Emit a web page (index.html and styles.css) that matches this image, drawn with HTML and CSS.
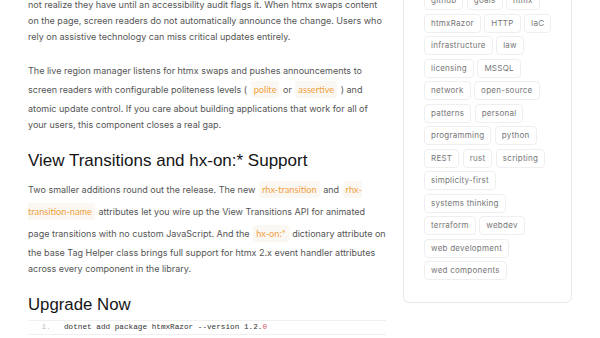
FILE: index.html
```html
<!DOCTYPE html>
<html lang="en">
<head>
    <meta charset="UTF-8">
    <meta name="viewport" content="width=device-width, initial-scale=1.0">
    <title>htmxRazor 1.2.0 Release Notes</title>
    <link rel="stylesheet" href="styles.css">
</head>
<body>
    <div class="layout">
        <main class="post">
            <p>not realize they have until an accessibility audit flags it. When htmx swaps content on the page, screen readers do not automatically announce the change. Users who rely on assistive technology can miss critical updates entirely.</p>

            <p>The live region manager listens for htmx swaps and pushes announcements to screen readers with configurable politeness levels ( <code>polite</code> or <code>assertive</code> ) and atomic update control. If you care about building applications that work for all of your users, this component closes a real gap.</p>

            <h2>View Transitions and hx-on:* Support</h2>

            <p>Two smaller additions round out the release. The new <code>rhx-transition</code> and <code>rhx-transition-name</code> attributes let you wire up the View Transitions API for animated page transitions with no custom JavaScript. And the <code>hx-on:*</code> dictionary attribute on the base Tag Helper class brings full support for htmx 2.x event handler attributes across every component in the library.</p>

            <h2 class="upgrade">Upgrade Now</h2>

            <div class="codeblock">
                <span class="ln">1.</span>
                <span class="code">dotnet add package htmxRazor --version 1.2.<span class="num">0</span></span>
            </div>
        </main>

        <aside class="sidebar">
            <div class="card">
                <div class="tags">
                    <span class="tag">github</span>
                    <span class="tag">goals</span>
                    <span class="tag">htmx</span>
                    <span class="tag">htmxRazor</span>
                    <span class="tag">HTTP</span>
                    <span class="tag">IaC</span>
                    <span class="tag">infrastructure</span>
                    <span class="tag">law</span>
                    <span class="tag">licensing</span>
                    <span class="tag">MSSQL</span>
                    <span class="tag">network</span>
                    <span class="tag">open-source</span>
                    <span class="tag">patterns</span>
                    <span class="tag">personal</span>
                    <span class="tag">programming</span>
                    <span class="tag">python</span>
                    <span class="tag">REST</span>
                    <span class="tag">rust</span>
                    <span class="tag">scripting</span>
                    <span class="tag">simplicity-first</span>
                    <span class="tag">systems thinking</span>
                    <span class="tag">terraform</span>
                    <span class="tag">webdev</span>
                    <span class="tag">web development</span>
                    <span class="tag">wed components</span>
                </div>
            </div>
        </aside>
    </div>
</body>
</html>
```

FILE: styles.css
```css
body {
    margin: 0;
    background-color: #fff;
    font-family: 'Inter', 'Liberation Sans', sans-serif;
    color: #555;
    overflow: hidden;
}

.layout {
    display: flex;
    align-items: flex-start;
    gap: 17px;
    padding: 0 28px;
}

.post {
    width: 358px;
    flex-shrink: 0;
    margin-top: -3px;
}

.post p {
    font-size: 9px;
    line-height: 16px;
    margin: 0 0 18px;
}

.post h2 {
    font-family: 'Liberation Sans', 'Inter', sans-serif;
    font-size: 17px;
    font-weight: 400;
    color: #151515;
    margin: 0 0 8px;
    line-height: 20px;
}

.post h2.upgrade {
    font-size: 16.8px;
    margin-bottom: 5px;
}

.post code {
    font-family: 'Lato', 'Inter', sans-serif;
    font-size: 9.2px;
    line-height: 22px;
    padding: 3px 3px;
    margin: 0 1px;
    color: #f0a03c;
    background-color: #fbf8f4;
    border-radius: 3px;
}

.codeblock {
    display: flex;
    align-items: center;
    border-top: 1px solid #f0f0f0;
    border-bottom: 1px solid #f0f0f0;
    padding: 1px 0;
    font-family: 'Liberation Mono', monospace;
    font-size: 7.7px;
    line-height: 11px;
}

.ln {
    width: 36px;
    text-align: center;
    color: #bbb;
}

.code {
    color: #333;
}

.num {
    color: #d9536a;
}

.sidebar {
    width: 169px;
    flex-shrink: 0;
}

.card {
    margin-top: -30px;
    border: 1px solid #e8e8e8;
    border-radius: 6px;
    padding: 20px 14px 22px 20px;
}

.tags {
    display: flex;
    flex-wrap: wrap;
    gap: 3.5px;
}

.tag {
    font-size: 8px;
    line-height: 11px;
    letter-spacing: 0.25px;
    color: #777;
    padding: 3px 6px;
    border: 1px solid #efefef;
    border-radius: 4px;
}
```
